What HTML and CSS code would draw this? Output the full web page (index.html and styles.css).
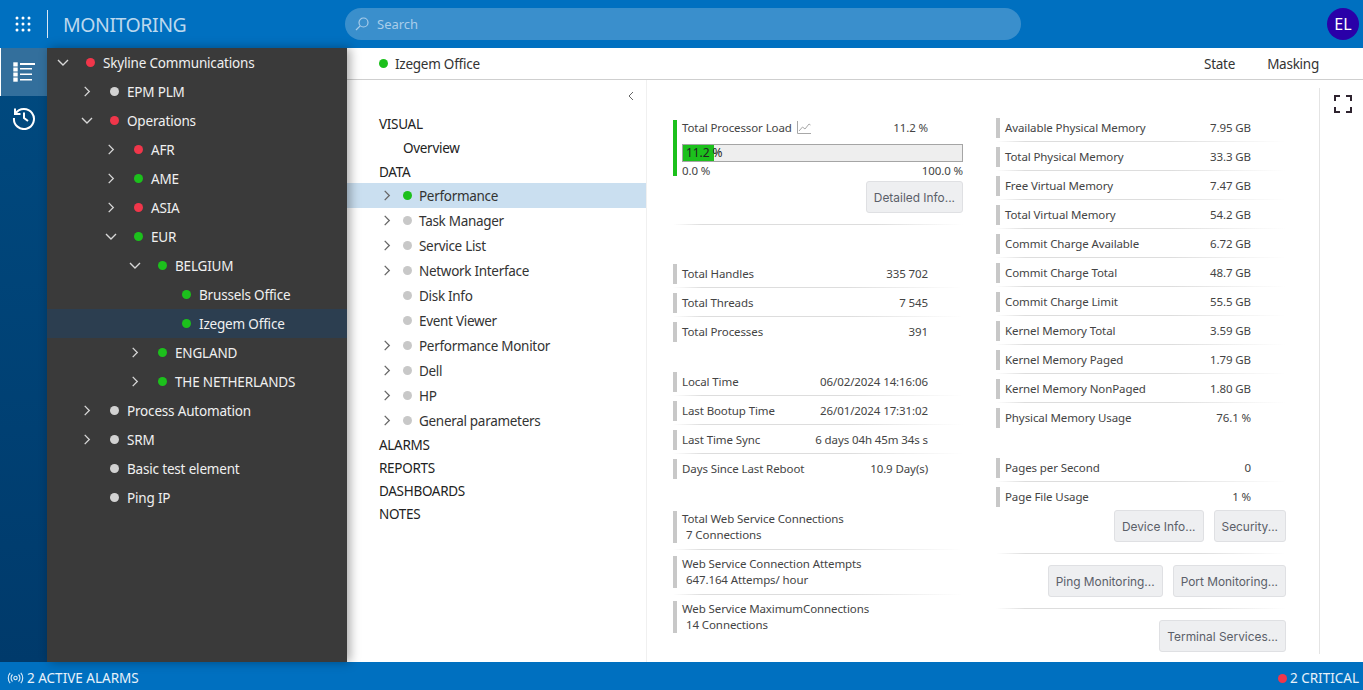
FILE: index.html
```html
<!DOCTYPE html>
<html lang="en">
<head>
     <meta charset="UTF-8">
     <title>Monitoring</title>
     <link rel="stylesheet" href="styles.css">
</head>
<body>
     <svg class="sprites" width="0" height="0">
          <symbol id="chev-r" viewBox="0 0 10 12"><path d="M2.5 1l5 5-5 5" fill="none" stroke="currentColor" stroke-width="1.4"/></symbol>
          <symbol id="chev-d" viewBox="0 0 12 10"><path d="M1 2.5l5 5 5-5" fill="none" stroke="currentColor" stroke-width="1.4"/></symbol>
     </svg>
     <header class="app-top">
          <svg class="apps" width="16" height="16" viewBox="0 0 16 16" fill="#fff">
               <circle cx="2" cy="2" r="1.5"/><circle cx="8" cy="2" r="1.5"/><circle cx="14" cy="2" r="1.5"/>
               <circle cx="2" cy="8" r="1.5"/><circle cx="8" cy="8" r="1.5"/><circle cx="14" cy="8" r="1.5"/>
               <circle cx="2" cy="14" r="1.5"/><circle cx="8" cy="14" r="1.5"/><circle cx="14" cy="14" r="1.5"/>
          </svg>
          <h1 class="app-title">MONITORING</h1>
          <div class="search">
               <svg width="14" height="14" viewBox="0 0 14 14" fill="none" stroke="#a9cdea" stroke-width="1.2"><circle cx="8.5" cy="5.5" r="4.5"/><path d="M5.2 8.8L1 13"/></svg>
               <span>Search</span>
          </div>
          <div class="avatar">EL</div>
     </header>

     <div class="app-body">
          <nav class="rail">
               <div class="rail-item active">
                    <svg width="22" height="20" viewBox="0 0 22 20" fill="#fff">
                         <path d="M0 0h5v5H0zM0 5h5v5H0zM0 10h5v5H0zM0 15h5v5H0z" fill="#fff" stroke="#336f9c" stroke-width=".6"/>
                         <path d="M7 1h15v2H7zM7 6h12v1.500H7zM7 11.500h12V13H7zM7 17h12v1.500H7z"/>
                    </svg>
               </div>
               <div class="rail-item hist">
                    <svg width="24" height="24" viewBox="0 0 24 24" fill="none" stroke="#fff" stroke-width="2"><path d="M3.600 7.500A10 10 0 1 1 2 12"/><path d="M3 2.500v5.500h5.500"/><path d="M12 6.500V12l4 3"/></svg>
               </div>
          </nav>

          <aside class="tree">
               <div class="node lvl0"><svg class="tw"><use href="#chev-d"/></svg><i class="dot red"></i>Skyline Communications</div>
               <div class="node lvl1"><svg class="tw"><use href="#chev-r"/></svg><i class="dot grey"></i>EPM PLM</div>
               <div class="node lvl1"><svg class="tw"><use href="#chev-d"/></svg><i class="dot red"></i>Operations</div>
               <div class="node lvl2"><svg class="tw"><use href="#chev-r"/></svg><i class="dot red"></i>AFR</div>
               <div class="node lvl2"><svg class="tw"><use href="#chev-r"/></svg><i class="dot green"></i>AME</div>
               <div class="node lvl2"><svg class="tw"><use href="#chev-r"/></svg><i class="dot red"></i>ASIA</div>
               <div class="node lvl2"><svg class="tw"><use href="#chev-d"/></svg><i class="dot green"></i>EUR</div>
               <div class="node lvl3"><svg class="tw"><use href="#chev-d"/></svg><i class="dot green"></i>BELGIUM</div>
               <div class="node lvl4"><span class="tw"></span><i class="dot green"></i>Brussels Office</div>
               <div class="node lvl4 selected"><span class="tw"></span><i class="dot green"></i>Izegem Office</div>
               <div class="node lvl3"><svg class="tw"><use href="#chev-r"/></svg><i class="dot green"></i>ENGLAND</div>
               <div class="node lvl3"><svg class="tw"><use href="#chev-r"/></svg><i class="dot green"></i>THE NETHERLANDS</div>
               <div class="node lvl1"><svg class="tw"><use href="#chev-r"/></svg><i class="dot grey"></i>Process Automation</div>
               <div class="node lvl1"><svg class="tw"><use href="#chev-r"/></svg><i class="dot grey"></i>SRM</div>
               <div class="node lvl1"><span class="tw"></span><i class="dot grey"></i>Basic test element</div>
               <div class="node lvl1"><span class="tw"></span><i class="dot grey"></i>Ping IP</div>
          </aside>

          <main class="main">
               <div class="card-head">
                    <i class="dot green"></i><span class="card-name">Izegem Office</span>
                    <span class="head-link">State</span>
                    <span class="head-link">Masking</span>
               </div>
               <div class="card-body">
                    <section class="pages">
                         <div class="collapse"><svg width="8" height="10" viewBox="0 0 8 10" fill="none" stroke="#666" stroke-width="1"><path d="M6 1L2 5l4 4"/></svg></div>
                         <div class="sec">VISUAL</div>
                         <div class="sub">Overview</div>
                         <div class="sec sec-data">DATA</div>
                         <div class="page on"><svg class="pg-tw"><use href="#chev-r"/></svg><i class="dot green"></i>Performance</div>
                         <div class="page"><svg class="pg-tw"><use href="#chev-r"/></svg><i class="dot lgrey"></i>Task Manager</div>
                         <div class="page"><svg class="pg-tw"><use href="#chev-r"/></svg><i class="dot lgrey"></i>Service List</div>
                         <div class="page"><svg class="pg-tw"><use href="#chev-r"/></svg><i class="dot lgrey"></i>Network Interface</div>
                         <div class="page"><span class="pg-tw"></span><i class="dot lgrey"></i>Disk Info</div>
                         <div class="page"><span class="pg-tw"></span><i class="dot lgrey"></i>Event Viewer</div>
                         <div class="page"><svg class="pg-tw"><use href="#chev-r"/></svg><i class="dot lgrey"></i>Performance Monitor</div>
                         <div class="page"><svg class="pg-tw"><use href="#chev-r"/></svg><i class="dot lgrey"></i>Dell</div>
                         <div class="page"><svg class="pg-tw"><use href="#chev-r"/></svg><i class="dot lgrey"></i>HP</div>
                         <div class="page"><svg class="pg-tw"><use href="#chev-r"/></svg><i class="dot lgrey"></i>General parameters</div>
                         <div class="sec sec-low sec-alarms">ALARMS</div>
                         <div class="sec sec-low">REPORTS</div>
                         <div class="sec sec-low">DASHBOARDS</div>
                         <div class="sec sec-low">NOTES</div>
                    </section>

                    <section class="data">
                         <div class="col col-left">
                              <div class="cpu">
                                   <div class="cpu-top">
                                        <span class="cpu-label">Total Processor Load
                                             <svg width="14" height="13" viewBox="0 0 14 13" fill="none" stroke="#a8a8a8"><path d="M.5 0v12.500H14"/><path d="M2 10l3.500-4 2.500 2 4-5 1.500 1"/></svg>
                                        </span>
                                        <span class="val">11.2 %</span>
                                   </div>
                                   <div class="bar"><div class="fill" style="width:11.2%"></div><span class="bar-txt">11.2 %</span></div>
                                   <div class="scale"><span>0.0 %</span><span>100.0 %</span></div>
                              </div>
                              <div class="btns first"><button>Detailed Info...</button></div>
                              <div class="sep sep-cpu"></div>

                              <div class="group g-handles">
                                   <div class="row"><span>Total Handles</span><span>335 702</span></div>
                                   <div class="row"><span>Total Threads</span><span>7 545</span></div>
                                   <div class="row last"><span>Total Processes</span><span>391</span></div>
                              </div>
                              <div class="group g-time">
                                   <div class="row"><span>Local Time</span><span>06/02/2024 14:16:06</span></div>
                                   <div class="row"><span>Last Bootup Time</span><span>26/01/2024 17:31:02</span></div>
                                   <div class="row"><span>Last Time Sync</span><span>6 days 04h 45m 34s s</span></div>
                                   <div class="row last"><span>Days Since Last Reboot</span><span>10.9 Day(s)</span></div>
                              </div>
                              <div class="group g-web">
                                   <div class="stack"><div class="stack-in">Total Web Service Connections<br><span class="sv">7 Connections</span></div></div>
                                   <div class="stack"><div class="stack-in">Web Service Connection Attempts<br><span class="sv">647.164 Attemps/ hour</span></div></div>
                                   <div class="stack last"><div class="stack-in">Web Service MaximumConnections<br><span class="sv">14 Connections</span></div></div>
                              </div>
                         </div>

                         <div class="col col-right">
                              <div class="group">
                                   <div class="row"><span>Available Physical Memory</span><span>7.95 GB</span></div>
                                   <div class="row"><span>Total Physical Memory</span><span>33.3 GB</span></div>
                                   <div class="row"><span>Free Virtual Memory</span><span>7.47 GB</span></div>
                                   <div class="row"><span>Total Virtual Memory</span><span>54.2 GB</span></div>
                                   <div class="row"><span>Commit Charge Available</span><span>6.72 GB</span></div>
                                   <div class="row"><span>Commit Charge Total</span><span>48.7 GB</span></div>
                                   <div class="row"><span>Commit Charge Limit</span><span>55.5 GB</span></div>
                                   <div class="row"><span>Kernel Memory Total</span><span>3.59 GB</span></div>
                                   <div class="row"><span>Kernel Memory Paged</span><span>1.79 GB</span></div>
                                   <div class="row"><span>Kernel Memory NonPaged</span><span>1.80 GB</span></div>
                                   <div class="row last"><span>Physical Memory Usage</span><span>76.1 %</span></div>
                              </div>
                              <div class="group g-pages">
                                   <div class="row"><span>Pages per Second</span><span>0</span></div>
                                   <div class="row last"><span>Page File Usage</span><span>1 %</span></div>
                              </div>
                              <div class="btns b1"><button>Device Info...</button><button>Security...</button></div>
                              <div class="sep"></div>
                              <div class="btns b2"><button>Ping Monitoring...</button><button>Port Monitoring...</button></div>
                              <div class="sep"></div>
                              <div class="btns b2"><button>Terminal Services...</button></div>
                         </div>
                    </section>

                    <div class="tools">
                         <svg width="18" height="18" viewBox="0 0 18 18" fill="none" stroke="#2f2430" stroke-width="2"><path d="M1 6V1h5M12 1h5v5M17 12v5h-5M6 17H1v-5"/></svg>
                    </div>
               </div>
          </main>
     </div>

     <footer class="status">
          <svg width="17" height="12" viewBox="0 0 17 12" fill="none" stroke="#dcebf7" stroke-width="1.1"><circle cx="8.500" cy="6" r="1.700"/><path d="M5.500 2.500a5 5 0 0 0 0 7M11.500 2.500a5 5 0 0 1 0 7M3.200.8a8 8 0 0 0 0 10.400M13.800.8a8 8 0 0 1 0 10.400"/></svg>
          <span class="st-alarms">2 ACTIVE ALARMS</span>
          <i class="dot red st-dot"></i>
          <span>2 CRITICAL</span>
     </footer>
</body>
</html>
```

FILE: styles.css
```css
*{
     padding:0;
     margin:0;
     box-sizing:border-box;
     font-family:"Noto Sans","Open Sans",sans-serif;
}
html,body{
     width:100%;
     height:100%;
     overflow:hidden;
}
body{
     display:flex;
     flex-direction:column;
     background:#fff;
}
.sprites{position:absolute;}
.dot{
     display:inline-block;
     width:9px;
     height:9px;
     border-radius:50%;
     flex:none;
}
.red{background:#f0364a;}
.green{background:#1cc01c;}
.grey{background:#d2d2d2;}
.lgrey{background:#c8c8c8;}

/* top bar */
.app-top{
     height:48px;
     flex:none;
     background:#0070c0;
     display:flex;
     align-items:center;
     padding:0 4px 0 15px;
}
.apps{flex:none;}
.app-title{
     margin-left:16px;
     padding-left:15px;
     border-left:1px solid #d8e8f5;
     height:28px;
     line-height:29px;
     font-size:19.500px;
     font-weight:400;
     letter-spacing:-.45px;
     color:#bcd8ee;
     width:298px;
}
.search{
     width:676px;
     height:32px;
     border-radius:16px;
     background:#3a8fcc;
     display:flex;
     align-items:center;
     padding-left:10px;
     gap:8px;
     color:#a9cdea;
     font-size:13px;
}
.avatar{
     margin-left:auto;
     width:32px;
     height:32px;
     border-radius:50%;
     background:#2a00a8;
     color:#fff;
     font-size:16px;
     line-height:32px;
     text-align:center;
}

.app-body{
     flex:1;
     display:flex;
     min-height:0;
}

/* left rail */
.rail{
     width:47px;
     flex:none;
     background:linear-gradient(#004a80,#003a6b);
}
.rail-item{
     height:48px;
     display:flex;
     align-items:center;
     justify-content:center;
}
.rail-item.active{
     background:#336f9c;
     border-left:1px solid #fff;
}
.hist{padding-bottom:4px;}

/* element tree */
.tree{
     width:300px;
     flex:none;
     background:#3a3a3a;
     color:#f0f0f0;
     font-size:13.500px;
     letter-spacing:-.18px;
     box-shadow:3px 0 10px rgba(0,0,0,.35);
     position:relative;
     z-index:2;
}
.node{
     height:29px;
     display:flex;
     align-items:center;
}
.tw{
     width:12px;
     height:11px;
     flex:none;
     margin-right:17px;
     color:#d8d8d8;
}
.node .dot{margin-right:8px;}
.lvl0{padding-left:10px;}
.lvl1{padding-left:34px;}
.lvl2{padding-left:58px;}
.lvl3{padding-left:82px;}
.lvl4{padding-left:106px;}
.selected{background:#2c3e50;}

/* main */
.main{
     flex:1;
     min-width:0;
     display:flex;
     flex-direction:column;
     color:#333;
}
.card-head{
     height:32px;
     flex:none;
     border-bottom:1px solid #cfcfcf;
     display:flex;
     align-items:center;
     padding:0 44px 0 32px;
     font-size:13.500px;
     letter-spacing:-.25px;
     gap:7px;
}
.card-name{margin-right:auto;}
.head-link{margin-left:25px;}
.card-body{
     flex:1;
     display:flex;
     min-height:0;
}
.pages{
     width:300px;
     flex:none;
     border-right:1px solid #f0f0f0;
     font-size:13.500px;
     letter-spacing:-.3px;
     color:#222;
}
.collapse{
     height:32px;
     display:flex;
     justify-content:flex-end;
     align-items:center;
     padding-right:11px;
}
.sec{
     height:24px;
     line-height:24px;
     padding-left:32px;
}
.sec-data{height:23px;}
.sub{
     height:24px;
     line-height:24px;
     padding-left:56px;
}
.sec-low{height:23px;line-height:23px;}
.sec-alarms{margin-top:1px;}
.page{
     height:25px;
     display:flex;
     align-items:center;
     padding-left:35px;
     color:#333;
}
.page.on{background:#cadff0;}
.pg-tw{
     width:10px;
     height:11px;
     flex:none;
     margin-right:11px;
     color:#666;
}
.page .dot{margin-right:7px;}

/* data columns */
.data{
     width:673px;
     flex:none;
     margin:8px 0;
     border-right:1px solid #e4e4e4;
     display:flex;
     padding-left:26px;
     font-size:11.500px;
     letter-spacing:-.1px;
     color:#444;
}
.col{width:290px;flex:none;}
.col-right{margin-left:33px;padding-top:25px;}
.col-left{padding-top:32px;}
.cpu{
     height:56px;
     border-left:4px solid #1cc01c;
     padding-left:5px;
}
.cpu-top{
     display:flex;
     justify-content:space-between;
     width:246px;
     height:24px;
}
.cpu-label svg{margin-left:2px;vertical-align:-2px;}
.val{text-align:right;}
.bar{
     height:18px;
     border:1px solid #a5a5a5;
     background:#eee;
     position:relative;
     color:#222;
}
.fill{height:100%;background:#1cc01c;}
.bar-txt{
     position:absolute;
     left:3px;
     top:0;
     font-size:12px;
     line-height:16px;
}
.scale{
     display:flex;
     justify-content:space-between;
     line-height:15px;
     padding-top:1px;
}
.btns{
     display:flex;
     justify-content:flex-end;
     gap:10px;
}
.btns button{
     height:32px;
     padding:0 7px;
     border:1px solid #dfe0e3;
     border-radius:3px;
     background:#eeeff1;
     color:#5b6069;
     font-family:Inter,sans-serif;
     font-size:11.900px;
}
.first{margin-top:5px;}
.sep{
     height:1px;
     margin-top:11px;
     background:linear-gradient(to right,#fff,#ddd 10%,#ddd 70%,#fff);
}
.sep-cpu{margin-bottom:34px;}
.b1{margin-top:-1px;}
.b2{margin-top:11px;}
.row{
     height:29px;
     display:flex;
     justify-content:space-between;
     align-items:center;
     width:255px;
     padding-left:9px;
     position:relative;
}
.row:before{
     content:"";
     position:absolute;
     left:0;
     top:5px;
     width:4px;
     height:20px;
     background:#c8c8c8;
}
.row:after{
     content:"";
     position:absolute;
     left:0;
     bottom:0;
     width:290px;
     height:1px;
     background:linear-gradient(to right,#fff,#ddd 10%,#ddd 60%,#fff);
}
.row.last:after{display:none;}
.g-time{margin-top:21px;}
.g-web{margin-top:28px;}
.g-pages{margin-top:21px;}
.stack{
     height:45px;
     position:relative;
}
.stack-in{
     height:32px;
     border-left:4px solid #c8c8c8;
     padding-left:5px;
     line-height:16px;
     white-space:nowrap;
}
.sv{padding-left:4px;}
.stack:after{
     content:"";
     position:absolute;
     left:0;
     top:38px;
     width:290px;
     height:1px;
     background:linear-gradient(to right,#fff,#ddd 10%,#ddd 60%,#fff);
}
.stack.last:after{display:none;}
.tools{
     flex:1;
     padding:15px 0 0 14px;
}

/* status bar */
.status{
     height:28px;
     flex:none;
     background:#0070c0;
     color:#e8f2fa;
     font-size:13.500px;
     display:flex;
     align-items:center;
     padding:4px 4px 0 7px;
}
.st-alarms{margin-left:3px;}
.st-dot{margin-left:auto;margin-right:3px;}
```
